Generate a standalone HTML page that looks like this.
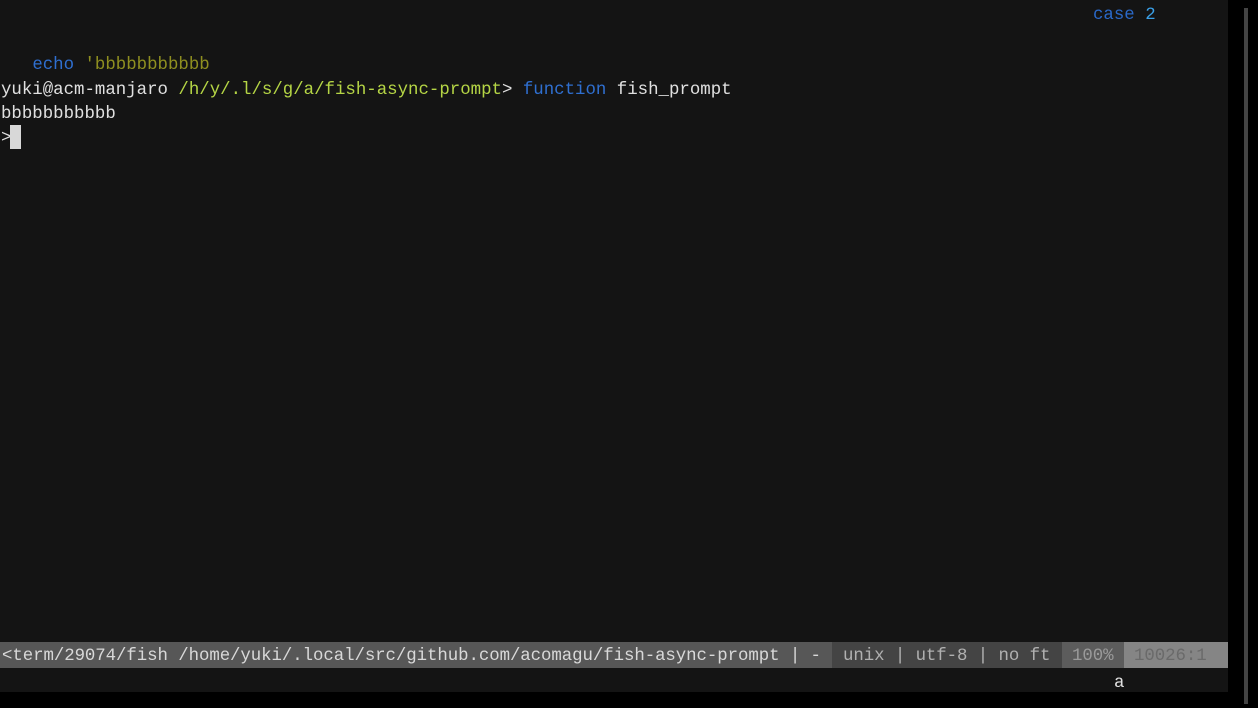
<!DOCTYPE html>
<html><head><meta charset="utf-8"><style>
html,body{margin:0;padding:0;}
body{width:1258px;height:708px;background:#000;position:relative;overflow:hidden;font-family:"Liberation Mono",monospace;font-size:17.4px;}
#term{position:absolute;left:0;top:0;width:1228px;height:692px;background:#141414;}
.r{position:absolute;white-space:pre;line-height:25px;height:25px;color:#e0e0e0;}
.bl{color:#2f6fd0}.yl{color:#8f8f20}.gr{color:#b5d545}
#sb{position:absolute;left:1244px;top:8px;width:4px;height:696px;background:#444;}
.seg{position:absolute;top:642px;height:26px;line-height:30px;white-space:pre;overflow:hidden;letter-spacing:-0.07px;}
#cur{position:absolute;left:10px;top:125px;width:11px;height:24px;background:#d8d8d8;}
</style></head><body>
<div id="term">
<div class="r" style="left:1093px;top:3px"><span style="color:#2a68c8">case</span> <span style="color:#3aa0e8">2</span></div>
<div class="r" style="left:1px;top:53px">   <span class="bl">echo</span> <span class="yl">'bbbbbbbbbbb</span></div>
<div class="r" style="left:1px;top:78px">yuki@acm-manjaro <span class="gr">/h/y/.l/s/g/a/fish-async-prompt</span>&gt; <span class="bl">function</span> fish_prompt</div>
<div class="r" style="left:1px;top:102px">bbbbbbbbbbb</div>
<div class="r" style="left:1px;top:126px">&gt;</div>
<div id="cur"></div>
<div class="seg" style="left:0;width:832px;background:#575757;color:#d8d8d8;padding-left:2px;box-sizing:border-box">&lt;term/29074/fish /home/yuki/.local/src/github.com/acomagu/fish-async-prompt | -</div>
<div class="seg" style="left:832px;width:230px;background:#444;color:#b0b0b0;padding-left:11px;box-sizing:border-box">unix | utf-8 | no ft</div>
<div class="seg" style="left:1062px;width:62px;background:#5c5c5c;color:#9a9a9a;padding-left:10px;box-sizing:border-box">100%</div>
<div class="seg" style="left:1124px;width:104px;background:#858585;color:#6a6a6a;padding-left:10px;box-sizing:border-box">10026:1</div>
<div class="r" style="left:1114px;top:671px;color:#e0e0e0">a</div>
</div>
<div id="sb"></div>
</body></html>
